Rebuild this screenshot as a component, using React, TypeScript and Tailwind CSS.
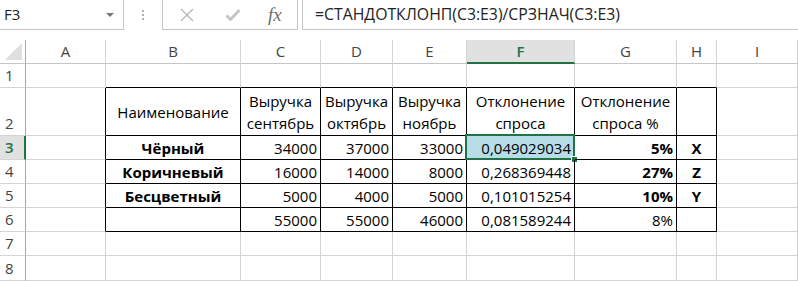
import React from "react"

const cols = ["", "A", "B", "C", "D", "E", "F", "G", "H", "I"]

type Cell = { v: string; align?: "l" | "c" | "r"; bold?: boolean }

// sheet rows 1..8, columns A..I
const data: Record<number, Record<number, Cell>> = {
  2: {
    2: { v: "Наименование", align: "c" },
    3: { v: "Выручка\nсентябрь", align: "c" },
    4: { v: "Выручка\nоктябрь", align: "c" },
    5: { v: "Выручка\nноябрь", align: "c" },
    6: { v: "Отклонение\nспроса", align: "c" },
    7: { v: "Отклонение\nспроса %", align: "c" },
  },
  3: {
    2: { v: "Чёрный", align: "c", bold: true },
    3: { v: "34000" },
    4: { v: "37000" },
    5: { v: "33000" },
    6: { v: "0,049029034" },
    7: { v: "5%", bold: true },
    8: { v: "X", align: "c", bold: true },
  },
  4: {
    2: { v: "Коричневый", align: "c", bold: true },
    3: { v: "16000" },
    4: { v: "14000" },
    5: { v: "8000" },
    6: { v: "0,268369448" },
    7: { v: "27%", bold: true },
    8: { v: "Z", align: "c", bold: true },
  },
  5: {
    2: { v: "Бесцветный", align: "c", bold: true },
    3: { v: "5000" },
    4: { v: "4000" },
    5: { v: "5000" },
    6: { v: "0,101015254" },
    7: { v: "10%", bold: true },
    8: { v: "Y", align: "c", bold: true },
  },
  6: {
    3: { v: "55000" },
    4: { v: "55000" },
    5: { v: "46000" },
    6: { v: "0,081589244" },
    7: { v: "8%" },
  },
}

const inTable = (r: number, c: number) => r >= 2 && r <= 6 && c >= 2 && c <= 8

const rowH: Record<number, string> = {
  1: "h-[24px]",
  2: "h-[48px]",
  3: "h-[24px]",
  4: "h-[24px]",
  5: "h-[24px]",
  6: "h-[24px]",
  7: "h-[24px]",
  8: "h-[25px]",
}

function CellBox({ r, c }: { r: number; c: number }) {
  const right = inTable(r, c) || inTable(r, c + 1) ? "border-r-black" : "border-r-[#d4d4d4]"
  const bottom = inTable(r, c) || inTable(r + 1, c) ? "border-b-black" : "border-b-[#d4d4d4]"
  const cell = data[r]?.[c]
  const selected = r === 3 && c === 6
  const align =
    cell?.align === "c" ? "justify-center text-center" : cell?.align === "l" ? "justify-start" : "justify-end text-right"

  return (
    <div
      className={`relative flex items-center border-r border-b px-[3px] ${right} ${bottom} ${rowH[r]} ${
        selected ? "bg-[#b7dee8]" : ""
      } ${align}`}
    >
      {cell && (
        <span className={`whitespace-pre leading-[22px] ${cell.bold ? "font-bold" : ""}`}>{cell.v}</span>
      )}
      {selected && (
        <>
          <div className="absolute -left-[2px] -top-[2px] -right-[1px] -bottom-[1px] border-2 border-[#217346]" />
          <div className="absolute -right-[4px] -bottom-[4px] size-[7px] border border-white bg-[#217346]" />
        </>
      )}
    </div>
  )
}

function RowHeader({ r }: { r: number }) {
  const active = r === 3
  return (
    <div
      className={`flex border-b border-b-[#d4d4d4] pl-[5px] ${rowH[r]} ${
        r === 2 ? "items-end pb-[1px]" : "items-center"
      } ${
        active
          ? "border-r-2 border-r-[#217346] bg-[#e1e1e1] font-semibold text-[#217346]"
          : "border-r border-r-[#a6a6a6] text-[#444]"
      }`}
    >
      {r}
    </div>
  )
}

export default function App() {
  return (
    <div className="h-[281px] w-[798px] overflow-hidden bg-white text-[15px] text-black [font-family:'Open_Sans',sans-serif]">
      {/* formula bar */}
      <div className="flex h-[40px] items-start">
        <div className="flex h-[30px] w-[124px] items-center justify-between border-r border-b border-[#c6c6c6] pl-[4px] pr-[9px] text-[#222]">
          <span>F3</span>
          <span className="h-0 w-0 border-x-[4px] border-t-[4px] border-x-transparent border-t-[#777]" />
        </div>
        <div className="flex w-[38px] flex-col items-center gap-[2px] pt-[10px]">
          <span className="size-[2px] bg-[#b0b0b0]" />
          <span className="size-[2px] bg-[#b0b0b0]" />
          <span className="size-[2px] bg-[#b0b0b0]" />
        </div>
        <div className="flex h-[30px] w-[136px] items-center border-x border-b border-[#c6c6c6]">
          <svg width="14" height="14" viewBox="0 0 14 14" className="ml-[17px]">
            <path d="M1 1 L13 13 M13 1 L1 13" stroke="#b8b8b8" strokeWidth="1.4" fill="none" />
          </svg>
          <svg width="16" height="14" viewBox="0 0 16 14" className="ml-[31px]">
            <path d="M1.5 7.5 L5.5 11.5 L14.5 2" stroke="#c4c4c4" strokeWidth="2.8" fill="none" />
          </svg>
          <span className="ml-[27px] text-[19px] italic leading-none text-[#6e6e6e] [font-family:'Liberation_Serif',serif]">
            fx
          </span>
        </div>
        <div className="ml-[4px] flex h-[30px] flex-1 items-center border-l border-b border-[#c6c6c6] pl-[12px] text-[15.8px] text-[#222]">
          =СТАНДОТКЛОНП(C3:E3)/СРЗНАЧ(C3:E3)
        </div>
      </div>

      {/* sheet */}
      <div className="grid grid-cols-[26px_80px_135px_80px_72px_74px_108px_102px_40px_81px]">
        {cols.map((name, c) =>
          c === 0 ? (
            <div key={c} className="relative h-[24px] border-r border-b border-r-[#a6a6a6] border-b-[#c6c6c6]">
              <svg width="17" height="17" viewBox="0 0 17 17" className="absolute right-[3px] bottom-[3px]">
                <path d="M17 0 L17 17 L0 17 Z" fill="#dfdfdf" />
              </svg>
            </div>
          ) : c === 6 ? (
            <div
              key={c}
              className="flex h-[24px] items-center justify-center border-r border-b-2 border-r-[#d4d4d4] border-b-[#217346] bg-[#e1e1e1] font-semibold text-[#217346]"
            >
              {name}
            </div>
          ) : (
            <div
              key={c}
              className="flex h-[24px] items-center justify-center border-r border-b border-r-[#d4d4d4] border-b-[#c6c6c6] text-[#444]"
            >
              {name}
            </div>
          )
        )}
        {[1, 2, 3, 4, 5, 6, 7, 8].map((r) => (
          <React.Fragment key={r}>
            <RowHeader r={r} />
            {[1, 2, 3, 4, 5, 6, 7, 8, 9].map((c) => (
              <CellBox key={c} r={r} c={c} />
            ))}
          </React.Fragment>
        ))}
      </div>
    </div>
  )
}
